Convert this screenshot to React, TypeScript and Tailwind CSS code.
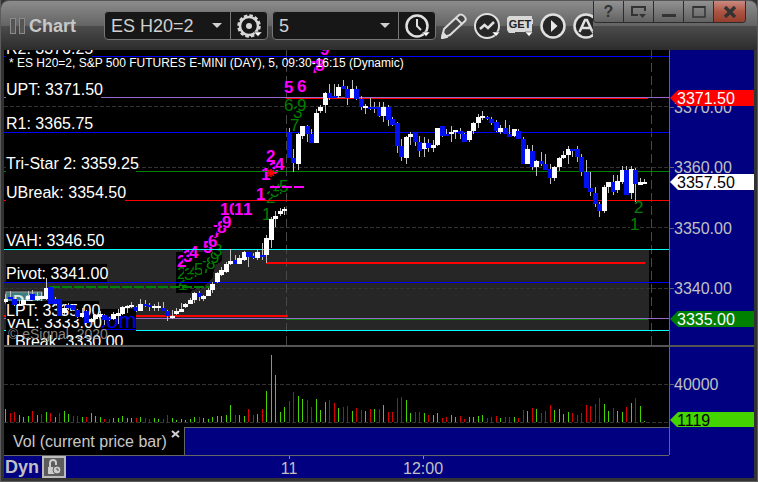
import type { ReactNode } from 'react'

// [high, body top, body bottom, low, up] in chart rows, one entry per 5 minute bar
type Candle = [number, number, number, number, 0 | 1]

const FIRST_X = 5.5
const BAR_STEP = 4.5

const CANDLES: Candle[] = [
  [294, 299, 302, 303, 1], [291, 297, 299, 299, 0], [296, 299, 305, 306, 0], [300, 304, 306, 306, 1],
  [299, 300, 305, 306, 1], [291, 296, 299, 300, 1], [290, 294, 300, 300, 0], [292, 296, 300, 301, 1],
  [292, 296, 299, 301, 1], [278, 288, 299, 300, 1], [287, 287, 304, 304, 0], [297, 299, 304, 305, 0],
  [299, 299, 316, 316, 0], [304, 308, 313, 315, 1], [303, 305, 308, 310, 0], [304, 305, 310, 311, 0],
  [309, 310, 317, 318, 0], [308, 313, 317, 318, 1], [310, 311, 323, 324, 0], [318, 319, 322, 326, 1],
  [314, 315, 319, 320, 1], [311, 314, 317, 318, 1], [314, 315, 320, 325, 0], [317, 318, 320, 321, 0],
  [312, 314, 319, 320, 1], [309, 313, 316, 324, 1], [306, 307, 314, 315, 1], [305, 306, 308, 313, 1],
  [302, 305, 307, 308, 1], [306, 307, 311, 312, 0], [299, 304, 311, 311, 1], [300, 304, 306, 307, 0],
  [303, 305, 307, 311, 0], [304, 306, 308, 311, 1], [302, 306, 308, 311, 1], [302, 308, 311, 311, 0],
  [310, 311, 316, 321, 0], [310, 316, 318, 319, 1], [308, 311, 314, 315, 1], [303, 309, 312, 312, 1],
  [303, 304, 307, 308, 1], [298, 300, 304, 304, 1], [292, 293, 300, 303, 1], [291, 293, 297, 301, 0],
  [295, 296, 299, 301, 1], [288, 290, 296, 296, 1], [282, 284, 290, 293, 1], [272, 273, 282, 283, 1],
  [267, 270, 275, 276, 1], [262, 264, 272, 273, 1], [249, 261, 264, 265, 1], [255, 260, 264, 264, 0],
  [255, 258, 264, 264, 1], [251, 252, 260, 261, 1], [252, 252, 257, 267, 0], [253, 256, 258, 259, 0],
  [250, 252, 258, 260, 1], [243, 255, 257, 260, 0], [235, 238, 255, 263, 1], [217, 219, 240, 248, 1],
  [211, 216, 219, 227, 1], [208, 211, 214, 216, 1], [207, 209, 211, 215, 1], [128, 132, 158, 158, 0],
  [149, 158, 163, 172, 0], [133, 134, 164, 170, 1], [126, 126, 136, 139, 1], [125, 126, 134, 142, 0],
  [129, 134, 143, 143, 0], [109, 113, 143, 143, 1], [105, 107, 111, 113, 1], [92, 93, 105, 113, 1],
  [84, 93, 98, 100, 0], [84, 96, 98, 98, 0], [84, 87, 96, 98, 1], [80, 86, 89, 89, 0],
  [86, 89, 98, 105, 0], [80, 89, 98, 98, 1], [86, 89, 99, 100, 0], [96, 99, 107, 110, 0],
  [104, 106, 108, 114, 1], [98, 107, 109, 110, 0], [102, 107, 109, 113, 0], [102, 107, 116, 117, 0],
  [102, 107, 116, 122, 1], [105, 107, 120, 126, 0], [117, 119, 125, 126, 0], [122, 123, 146, 153, 0],
  [139, 146, 157, 161, 0], [136, 137, 158, 164, 1], [132, 134, 137, 145, 1], [132, 132, 142, 146, 0],
  [136, 142, 151, 157, 0], [137, 143, 149, 157, 1], [139, 143, 148, 152, 0], [140, 145, 148, 152, 1],
  [128, 128, 145, 146, 1], [126, 126, 136, 137, 0], [129, 134, 136, 136, 0], [126, 132, 134, 142, 1],
  [130, 130, 132, 139, 1], [128, 131, 134, 139, 0], [133, 134, 142, 142, 0], [131, 131, 140, 142, 1],
  [122, 123, 131, 134, 1], [114, 117, 123, 128, 1], [111, 116, 118, 120, 1], [116, 117, 119, 120, 0],
  [117, 119, 123, 125, 0], [120, 122, 131, 132, 0], [125, 128, 132, 134, 1], [120, 128, 134, 134, 0],
  [125, 134, 137, 137, 0], [129, 129, 136, 137, 1], [129, 131, 139, 139, 0], [137, 139, 164, 164, 0],
  [145, 149, 164, 164, 1], [145, 151, 167, 170, 0], [160, 161, 167, 176, 1], [152, 161, 164, 166, 0],
  [154, 164, 170, 170, 0], [164, 169, 178, 184, 0], [166, 167, 178, 181, 1], [157, 158, 167, 171, 1],
  [151, 155, 158, 159, 1], [146, 149, 155, 164, 1], [149, 149, 151, 157, 0], [146, 149, 157, 162, 0],
  [154, 157, 172, 176, 0], [160, 172, 188, 188, 0], [172, 188, 192, 196, 0], [187, 193, 204, 207, 0],
  [202, 204, 211, 217, 0], [185, 187, 211, 213, 1], [182, 182, 187, 193, 1], [175, 182, 192, 195, 0],
  [175, 181, 190, 193, 1], [166, 170, 182, 184, 1], [166, 170, 195, 195, 0], [166, 169, 193, 199, 1],
  [168, 170, 184, 202, 0], [178, 182, 185, 185, 1], [179, 182, 184, 184, 1],
]

const VOLUMES = [
  13, 9, 10, 7, 5, 6, 11, 7, 8, 10, 9, 5, 9, 11, 8, 6, 6, 5, 5, 9, 6, 5, 3, 3, 4, 4, 6, 4, 4, 4, 5, 4, 3, 4, 3, 3,
  7, 4, 2, 3, 2, 3, 5, 5, 4, 3, 5, 6, 6, 7, 17, 7, 7, 6, 13, 7, 8, 13, 31, 67, 47, 10, 15, 21, 30, 26, 23, 22, 15,
  23, 12, 20, 22, 19, 14, 15, 16, 11, 14, 12, 11, 13, 13, 13, 17, 10, 10, 24, 25, 22, 9, 10, 10, 9, 7, 7, 9, 4, 5,
  7, 5, 6, 3, 5, 5, 6, 7, 4, 5, 6, 4, 5, 5, 5, 4, 12, 11, 14, 13, 9, 11, 17, 12, 13, 8, 10, 9, 7, 9, 17, 16, 18,
  24, 18, 11, 14, 11, 10, 15, 19, 24, 16, 1,
]

// g = closed up, r = closed down, ten bars per chunk
const VOLUME_COLORS = [
  'grrgggrgrg', 'rgrggrrgrg', 'ggrrgggggr', 'grrggrrggg', 'gggrgggggg',
  'grggrrgrgg', 'gggrrggrrg', 'ggrrgrrgrr', 'grgrgrrrrg', 'grrgrggrrg',
  'grrggggrrr', 'grrgrrgrgr', 'rrggggrrrr', 'rrrggrggrg', 'rgg',
].join('')

// later entries are painted over earlier ones
const LABELS = [
  { text: 'LBreak: 3330.00', y: 347, w: 117 },
  { text: 'VAL: 3333.00', y: 328, w: 95 },
  { text: 'LPT: 3335.00', y: 316, w: 93 },
  { text: 'Pivot: 3341.00', y: 279, w: 101 },
  { text: 'VAH: 3346.50', y: 246, w: 98 },
  { text: 'UBreak: 3354.50', y: 198, w: 119 },
  { text: 'Tri-Star 2: 3359.25', y: 169, w: 130 },
  { text: 'R1: 3365.75', y: 129, w: 86 },
  { text: 'UPT: 3371.50', y: 95, w: 95 },
  { text: 'R2: 3376.25', y: 54, w: 86 },
]

const LEVELS = [
  { x: 4, end: 669, y: 56, h: 1, color: '#0000ff' },
  { x: 4, end: 669, y: 97, h: 1, color: '#9966cc' },
  { x: 286, end: 648, y: 98, h: 1, color: '#ff0000' },
  { x: 4, end: 669, y: 132, h: 1, color: '#0000ff' },
  { x: 4, end: 669, y: 171, h: 1, color: '#008000' },
  { x: 4, end: 669, y: 200, h: 1, color: '#ff0000' },
  { x: 4, end: 669, y: 249, h: 1, color: '#00ffff' },
  { x: 266, end: 645, y: 262, h: 2, color: '#ff0000' },
  { x: 4, end: 669, y: 282, h: 1, color: '#0000ff' },
  { x: 4, end: 288, y: 315, h: 2, color: '#ff0000' },
  { x: 4, end: 669, y: 318, h: 1, color: '#9966cc' },
  { x: 286, end: 648, y: 319, h: 1, color: '#008000' },
  { x: 4, end: 669, y: 330, h: 1, color: '#00ffff' },
]

const UP_COUNTS: [string, number, number][] = [
  ['2', 177, 267], ['3', 183, 262], ['4', 189, 258], ['5', 203, 253], ['6', 208, 247],
  ['7', 213, 237], ['8', 217, 233], ['9', 222, 228], ['1', 220, 215], ['0', 229, 215],
  ['1', 234, 215], ['1', 243, 215], ['1', 256, 200], ['1', 261, 180], ['3', 269, 174],
  ['2', 266, 162], ['4', 275, 170], ['5', 284, 93], ['6', 297, 92], ['7', 311, 73],
  ['8', 315, 71], ['9', 320, 55],
]

const DOWN_COUNTS: [string, number, number][] = [
  ['1', 178, 290], ['2', 178, 286], ['2', 177, 279], ['3', 184, 280], ['4', 189, 277], ['5', 194, 275],
  ['7', 202, 273], ['8', 206, 269], ['9', 210, 263], ['3', 213, 256], ['1', 262, 220], ['2', 266, 203],
  ['3', 270, 197], ['4', 274, 194], ['5', 279, 192], ['7', 290, 131], ['3', 293, 118], ['6', 284, 111],
  ['9', 297, 111], ['2', 634, 213], ['1', 630, 230],
]

function barX(i: number) {
  return Math.floor(FIRST_X + BAR_STEP * i)
}

function PriceTag({ y, color, textColor, text }: { y: number; color: string; textColor: string; text: string }) {
  return (
    <g>
      <polygon points={`670,${y + 8} 678,${y} 754,${y} 754,${y + 16} 678,${y + 16}`} fill={color} />
      <text x={677} y={y + 14} fontSize={16} fill={textColor}>
        {text}
      </text>
    </g>
  )
}

function PriceChart() {
  return (
    <svg viewBox="4 50 750 295" className="block w-full h-auto" fontFamily="'Liberation Sans', Arial, sans-serif">
      <rect x={4} y={50} width={665} height={295} fill="#000" />
      <g shapeRendering="crispEdges">
        <rect x={4} y={250} width={645} height={80} fill="#262626" />
        <polygon points="176,252 209,252 213,245 222,245 222,261 214,266 213,278 206,284 204,288 192,290 191,293 176,293" fill="#000" />
        {[106, 167, 227, 288].map(y => (
          <line key={y} x1={4} x2={669} y1={y + 0.5} y2={y + 0.5} stroke="#333" strokeDasharray="4 2" />
        ))}
        {[286, 651].map(x => (
          <line key={x} x1={x + 0.5} x2={x + 0.5} y1={50} y2={345} stroke="#484848" strokeDasharray="9 4" />
        ))}
      </g>

      {/* bar counts, each on its own black cell */}
      {DOWN_COUNTS.map(([text, x, y]) => (
        <g key={`${x}-${y}`}>
          <rect x={x} y={y - 12} width={9} height={12} fill="#000" />
          <text x={x} y={y} fontSize={17} fill="#008000">
            {text}
          </text>
        </g>
      ))}
      {UP_COUNTS.map(([text, x, y]) => (
        <g key={`${x}-${y}`}>
          <rect x={x} y={y - 12} width={9} height={12} fill="#000" />
          <text x={x} y={y} fontSize={17} fontWeight="bold" fill="#ff00ff">
            {text}
          </text>
        </g>
      ))}

      <g shapeRendering="crispEdges">
        {LEVELS.map(level => (
          <rect key={level.y} x={level.x} y={level.y} width={level.end - level.x} height={level.h} fill={level.color} />
        ))}
        <line x1={50} x2={214} y1={287} y2={287} stroke="#008000" strokeWidth={2} strokeDasharray="10 2" />
        <line x1={270} x2={304} y1={187} y2={187} stroke="#ff00ff" strokeWidth={2} strokeDasharray="10 2" />
      </g>
      <path d="M271 169v8M267 173h8M268 170l6 6M274 170l-6 6" stroke="#ff0000" strokeWidth={1.5} />

      {/* vendor mark, mostly hidden by the level labels */}
      <rect x={6} y={292} width={36} height={12} fill="#3d7f7f" stroke="#999" />
      <text x={13} y={307} fontSize={16} fontWeight="bold" fill="#d8e8e8">
        DS
      </text>
      <rect x={100} y={309} width={36} height={22} fill="#000" />
      <text x={89} y={328} fontSize={22} fill="#0000f0">
        .com
      </text>
      <rect x={100} y={329} width={36} height={1} fill="#0000f0" />

      {LABELS.map(label => (
        <g key={label.text}>
          <rect x={6} y={label.y - 15} width={label.w} height={18} fill="#000" shapeRendering="crispEdges" />
          <text x={6} y={label.y} fontSize={16} fill="#fff">
            {label.text}
          </text>
        </g>
      ))}
      <text x={8} y={339} fontSize={14} fill="#a0a0a0" fillOpacity={0.85}>
        © eSignal, 2020
      </text>
      <text x={9} y={67} fontSize={12} fill="#fff">
        * ES H20=2, S&amp;P 500 FUTURES E-MINI (DAY), 5, 09:30-16:15 (Dynamic)
      </text>

      <g shapeRendering="crispEdges">
        {CANDLES.map(([high, top, bottom, low, up], i) => (
          <g key={i}>
            <rect x={barX(i)} y={high} width={1} height={low - high} fill="#c0c0c0" />
            <rect x={barX(i) - 2} y={top} width={5} height={bottom - top} fill={up ? '#fff' : '#0010f0'} />
          </g>
        ))}
      </g>

      {/* price axis */}
      <rect x={669} y={50} width={85} height={295} fill="#000080" />
      <rect x={669} y={50} width={1} height={295} fill="#666" />
      {[
        { text: '3370.00', y: 113 },
        { text: '3360.00', y: 173 },
        { text: '3350.00', y: 234 },
        { text: '3340.00', y: 294 },
      ].map(tick => (
        <g key={tick.text}>
          <rect x={670} y={tick.y - 6} width={4} height={1} fill="#666" />
          <text x={674} y={tick.y} fontSize={16} fill="#c0c0c0">
            {tick.text}
          </text>
        </g>
      ))}
      <PriceTag y={90} color="#ff0000" textColor="#fff" text="3371.50" />
      <PriceTag y={174} color="#fff" textColor="#000" text="3357.50" />
      <PriceTag y={311} color="#008000" textColor="#fff" text="3335.00" />
    </svg>
  )
}

function VolumeChart() {
  return (
    <svg viewBox="4 347 750 80" className="block w-full h-auto" fontFamily="'Liberation Sans', Arial, sans-serif">
      <rect x={4} y={347} width={665} height={80} fill="#000" />
      <g shapeRendering="crispEdges">
        {[384, 422].map(y => (
          <line key={y} x1={4} x2={669} y1={y + 0.5} y2={y + 0.5} stroke="#333" strokeDasharray="4 2" />
        ))}
        {VOLUMES.map((v, i) => (
          <rect key={i} x={barX(i)} y={422 - v} width={1} height={v} fill={VOLUME_COLORS[i] === 'r' ? '#d80000' : '#44d400'} />
        ))}
        <rect x={669} y={347} width={85} height={80} fill="#000080" />
        <rect x={669} y={347} width={1} height={80} fill="#666" />
        <rect x={670} y={384} width={4} height={1} fill="#666" />
      </g>
      <text x={674} y={390} fontSize={16} fill="#c0c0c0">
        40000
      </text>
      <PriceTag y={412} color="#44d400" textColor="#000" text="1119" />
    </svg>
  )
}

function Corner() {
  return <path d="M19 20h8l-4 4.5z" fill="#fff" stroke="#222" strokeWidth="0.5" />
}

function GearIcon() {
  return (
    <svg width="28" height="28" viewBox="0 0 28 28">
      <circle cx="14" cy="14" r="9" fill="none" stroke="#d8d8d8" strokeWidth="2.5" />
      <circle cx="14" cy="14" r="10.5" fill="none" stroke="#d8d8d8" strokeWidth="2.5" strokeDasharray="3.5 2" />
      <circle cx="14" cy="14" r="3" fill="#d8d8d8" />
      <Corner />
    </svg>
  )
}

function ClockIcon() {
  return (
    <svg width="28" height="28" viewBox="0 0 28 28" fill="none" stroke="#e0e0e0">
      <circle cx="14" cy="14" r="10.5" strokeWidth="2.5" />
      <path d="M14 7v7l4 4" strokeWidth="2" />
      <Corner />
    </svg>
  )
}

function PencilIcon() {
  return (
    <svg width="28" height="28" viewBox="0 0 28 28" fill="#444" stroke="#dcdcdc" strokeWidth="2" strokeLinejoin="round">
      <path d="M2 26l2-9L19 3c3-2 8.5 3 6 6L10 23z" />
      <path d="M16 6l6 6" />
      <path d="M2 26l1-5 4 4z" fill="#dcdcdc" />
    </svg>
  )
}

function StudyIcon() {
  return (
    <svg width="28" height="28" viewBox="0 0 28 28" fill="none" stroke="#e0e0e0">
      <circle cx="14" cy="14" r="12" fill="#262626" strokeWidth="2" />
      <path d="M7 17l4.5-4 3.5 3 6-6" strokeWidth="2.5" />
      <Corner />
    </svg>
  )
}

function GetIcon() {
  return (
    <svg width="28" height="28" viewBox="0 0 28 28">
      <path d="M3 4h23v3h1v5h-1v8H9v1H3l-2-3V6z" fill="#d8d8d8" />
      <text x="14" y="16" fontSize="11" fontWeight="bold" textAnchor="middle" fill="#222" fontFamily="'Liberation Sans', sans-serif">
        GET
      </text>
      <Corner />
    </svg>
  )
}

function PlayIcon() {
  return (
    <svg width="28" height="28" viewBox="0 0 28 28">
      <circle cx="14" cy="14" r="11.5" fill="#262626" stroke="#e0e0e0" strokeWidth="2.5" />
      <path d="M12 8v12l6.5-6z" fill="#e8e8e8" />
    </svg>
  )
}

function AlertIcon() {
  return (
    <svg width="28" height="28" viewBox="0 0 28 28">
      <circle cx="14" cy="14" r="11.5" fill="#262626" stroke="#e0e0e0" strokeWidth="2.5" />
      <path d="M7.5 20L13 8h2l5.5 12M10 16h8" fill="none" stroke="#e0e0e0" strokeWidth="2.5" />
      <Corner />
    </svg>
  )
}

function Combo({ label, value, action, icon }: { label: string; value: string; action: string; icon: ReactNode }) {
  return (
    <div className="flex h-[29px] w-[164px] shrink-0 rounded border border-[#777] bg-[#171717]">
      <div className="relative flex-1">
        <select
          aria-label={label}
          defaultValue={value}
          className="h-full w-full appearance-none bg-transparent pl-[6px] text-lg leading-none text-[#d0d0d0] outline-none"
        >
          <option>{value}</option>
        </select>
        <svg viewBox="0 0 10 5" className="pointer-events-none absolute right-2 top-[11px] h-[5px] w-[10px]">
          <path d="M0 0h10L5 5z" fill="#d0d0d0" />
        </svg>
      </div>
      <button aria-label={action} className="flex w-[37px] items-center justify-center border-l border-[#777]">
        {icon}
      </button>
    </div>
  )
}

const TOOLS = [
  { name: 'Draw', icon: <PencilIcon /> },
  { name: 'Studies', icon: <StudyIcon /> },
  { name: 'Advanced GET', icon: <GetIcon /> },
  { name: 'Playback', icon: <PlayIcon /> },
  { name: 'Alerts', icon: <AlertIcon /> },
]

const WINDOW_BUTTON =
  'flex h-full w-[30px] items-center justify-center border-r border-[#2c2c2c] bg-gradient-to-b from-[#929292] to-[#626262]'

function WindowControls() {
  return (
    <div className="mr-[11px] flex h-[22px] shrink-0 overflow-hidden rounded-b border border-t-0 border-[#2c2c2c]">
      <button aria-label="Help" className={WINDOW_BUTTON}>
        <span className="text-base font-bold text-[#333]">?</span>
      </button>
      <button aria-label="Window menu" className={WINDOW_BUTTON}>
        <svg width="16" height="14" viewBox="0 0 16 14" fill="none" stroke="#333" strokeWidth="2">
          <path d="M7 10H1V2h13v4" />
          <path d="M8 9h7l-3.5 4z" fill="#333" stroke="none" />
        </svg>
      </button>
      <button aria-label="Minimize" className={WINDOW_BUTTON}>
        <svg width="14" height="14" viewBox="0 0 14 14">
          <path d="M0 9h14v3H0z" fill="#333" />
        </svg>
      </button>
      <button aria-label="Maximize" className={WINDOW_BUTTON}>
        <svg width="14" height="14" viewBox="0 0 14 14" fill="none" stroke="#333">
          <path d="M1 2h12" strokeWidth="2" />
          <path d="M1 1v11h12V1" strokeWidth="1.5" />
        </svg>
      </button>
      <button
        aria-label="Close"
        className="flex h-full w-[31px] items-center justify-center bg-gradient-to-b from-[#c98b80] via-[#ad5545] to-[#963e2e]"
      >
        <svg width="14" height="12" viewBox="0 0 14 12">
          <path d="M2 1l10 10M12 1L2 11" stroke="#333" strokeWidth="3.5" />
        </svg>
      </button>
    </div>
  )
}

export default function App() {
  return (
    <div className="w-full overflow-hidden border-x border-b border-[#5c5c5c] bg-[#333] font-['Liberation_Sans',Arial,sans-serif]">
      <header className="flex h-[50px] items-start rounded-t-lg border-t border-[#555] bg-[linear-gradient(#8c8c8c,#646464_50%,#4c4c4c_51%,#2c2c2c)]">
        <div className="flex min-w-0 flex-1 items-center overflow-hidden pl-[9px] pt-[10px]">
          <div className="flex w-[94px] shrink-0 items-center gap-[3px]">
            <span className="h-4 w-[6px] border border-[#8a8a8a] bg-[#555]" />
            <span className="h-4 w-[6px] border border-[#8a8a8a] bg-[#555]" />
            <h1 className="pl-px text-lg leading-none font-bold text-[#c8c8c8]">Chart</h1>
          </div>
          <Combo label="Symbol" value="ES H20=2" action="Symbol settings" icon={<GearIcon />} />
          <div className="w-1 shrink-0" />
          <Combo label="Interval" value="5" action="Time template" icon={<ClockIcon />} />
          <div className="flex shrink-0 gap-[5px] pl-1">
            {TOOLS.map(tool => (
              <button key={tool.name} aria-label={tool.name}>
                {tool.icon}
              </button>
            ))}
          </div>
        </div>
        <WindowControls />
      </header>

      <main className="border-x-3 border-b-3 border-[#333] bg-[#000080]">
        <PriceChart />
        <div className="h-[2px] bg-[#555]" />
        <VolumeChart />

        <div className="flex h-7">
          <div className="flex w-[181px] items-start gap-1 border-r border-[#666] bg-black pl-[9px] text-[#c8c8c8]">
            <span className="pt-[5px] text-base leading-5 whitespace-nowrap">Vol (current price bar)</span>
            <button aria-label="Close study" className="pt-[3px]">
              <svg width="9" height="8" viewBox="0 0 9 8">
                <path d="M1 1l7 6M8 1L1 7" stroke="#d0d0d0" strokeWidth="2" />
              </svg>
            </button>
          </div>
          <div className="flex-1 border-t border-r border-[#666]" />
          <div className="w-[84px]" />
        </div>

        <footer className="flex h-[23px] text-base leading-5 text-[#c0c0c0]">
          <div className="relative flex flex-1 border-t border-[#666]">
            <strong className="w-[38px] pl-px text-lg leading-[22px]">Dyn</strong>
            <button
              aria-label="Lock time"
              className="flex h-[22px] w-6 items-center justify-center border-2 border-[#bbb] bg-[#5c5c5c]"
            >
              <svg width="18" height="18" viewBox="0 0 18 18" fill="none" stroke="#ccc" strokeWidth="2">
                <path d="M5 9V5a3 3 0 0 1 6 0v2" />
                <path d="M3 9h8v7H3z" fill="#ccc" stroke="none" />
                <circle cx="12" cy="12" r="4" fill="#ccc" stroke="#5c5c5c" strokeWidth="1" />
                <path d="M12 10v2h2" stroke="#555" strokeWidth="1" />
              </svg>
            </button>
            <div className="absolute left-[276px] top-0 flex w-[18px] flex-col items-center">
              <span className="h-[3px] w-px bg-[#888]" />
              <span className="leading-5">11</span>
            </div>
            <div className="absolute left-[399px] top-0 flex w-10 flex-col items-center">
              <span className="h-[3px] w-px bg-[#888]" />
              <span className="leading-5">12:00</span>
            </div>
          </div>
          <div className="w-[85px]" />
        </footer>
      </main>
    </div>
  )
}
